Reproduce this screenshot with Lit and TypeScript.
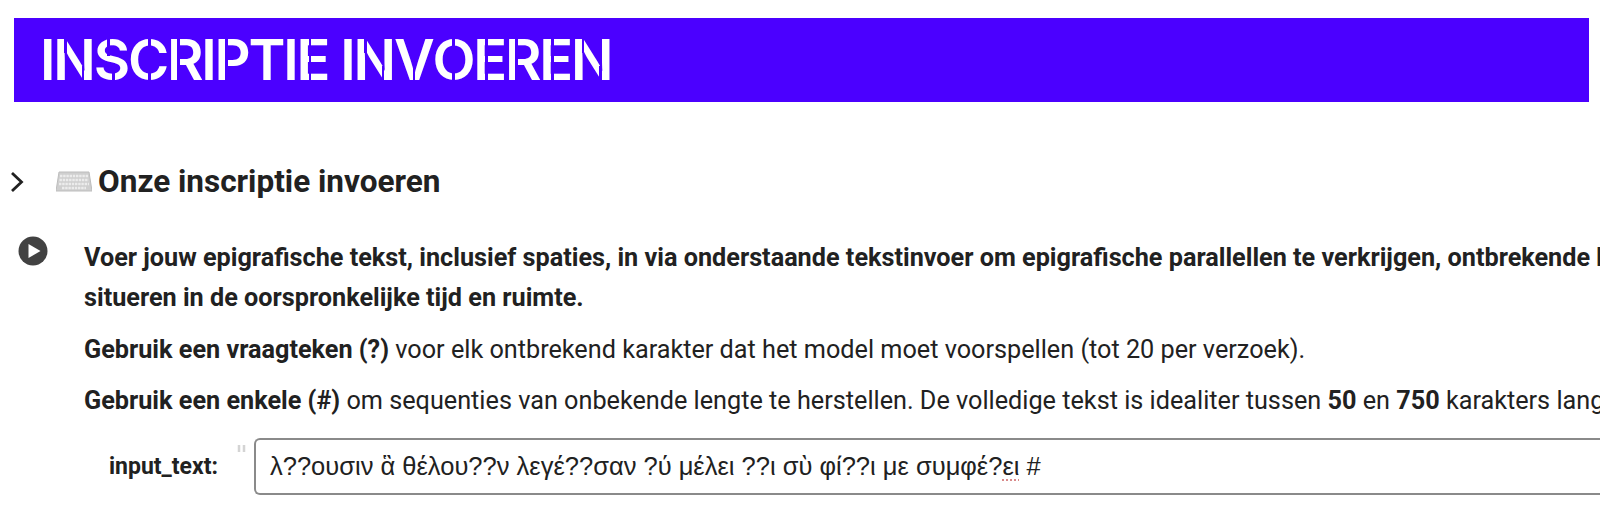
import { LitElement, html, css } from "lit";
import { customElement } from "lit/decorators.js";

type Cut = [number, number, number, number];
const CUTS: Record<string, Cut[]> = {
  N: [[27, 0, 2.5, 34], [70, 66, 2.5, 34]],
  S: [[40, 0, 3, 42], [54, 58, 3, 42]],
  C: [[52, 0, 3, 28], [52, 72, 3, 28]],
  R: [[30, 0, 2.5, 100]],
  P: [[31, 0, 2.5, 100]],
  E: [[38, 0, 2.5, 100]],
  V: [[49, 62, 2.5, 38]],
  O: [[49, 0, 3, 24], [49, 76, 3, 24]],
};

@customElement("app-root")
export class AppRoot extends LitElement {
  static styles = css`
    :host { display: block; width: 1600px; height: 528px; overflow: hidden; background: #fff; font-family: Roboto, "Liberation Sans", sans-serif; color: #212121; }
    .banner { height: 84px; margin: 18px 11px 0 14px; padding-left: 26px; background: #4b00ff; display: flex; align-items: center; }
    .title { font-family: Inter, sans-serif; font-weight: 600; font-size: 56px; letter-spacing: -2.2px; color: #fff; white-space: pre; line-height: 1; }
    .l { position: relative; display: inline-block; }
    .cut { position: absolute; background: #4b00ff; display: block; }
    .head { display: flex; align-items: center; margin-top: 58px; height: 44px; padding-left: 9px; }
    .chev { width: 16px; height: 24px; margin-right: 31px; }
    .kbd { width: 36px; height: 22px; margin-right: 6px; }
    h2 { margin: 0; font-size: 31.5px; font-weight: 700; line-height: 44px; white-space: nowrap; }
    .cell { display: flex; margin-top: 34px; padding-left: 18px; }
    .play { width: 30px; height: 30px; margin-right: 36px; flex: none; margin-top: -2px; }
    .body { flex: none; white-space: nowrap; font-size: 25.22px; color: #212121; }
    .body p { margin: 0 0 15px; line-height: 36px; font-weight: 400; }
    .body p.first { line-height: 40px; margin-bottom: 14px; }
    b { font-weight: 700; }
    .form { display: flex; align-items: center; margin-top: 4px; margin-left: 109px; }
    .label { font-weight: 700; font-size: 23px; width: 127px; flex: none; }
    .mark { width: 18px; flex: none; align-self: flex-start; }
    .input { border: 2px solid #8a8a8a; border-radius: 6px 0 0 6px; border-right: 0; height: 57px; box-sizing: border-box; width: 1400px; flex: none; padding-left: 14px; display: flex; align-items: center; font-family: "Liberation Sans", sans-serif; font-size: 25.5px; color: #212121; white-space: pre; }
    .sp { text-decoration: underline dotted #d98a8a 2px; text-underline-offset: 4px; }
  `;
  letter(c: string) {
    const cuts = CUTS[c] ?? [];
    return html`<span class="l">${c}${cuts.map(([x, y, w, h]) => html`<span class="cut" style="left:${x}%;top:${y * 0.73 + 13}%;width:${w}px;height:${h * 0.73}%"></span>`)}</span>`;
  }
  render() {
    return html`
      <div class="banner"><div class="title">${[..."INSCRIPTIE INVOEREN"].map((c) => this.letter(c))}</div></div>
      <div class="head">
        <svg class="chev" viewBox="0 0 16 24"><path d="M3 3l9.500 9-9.500 9" fill="none" stroke="#212121" stroke-width="2.8"/></svg>
        <svg class="kbd" viewBox="0 0 36 22"><path d="M3 1h30l3 19H0z" fill="#cfcfcf" stroke="#bdbdbd"/><path d="M4 5h28M3.500 9h29M3 13h30M6 17h24" stroke="#ececec" stroke-width="2.4" stroke-dasharray="2.4 .8"/></svg>
        <h2>Onze inscriptie invoeren</h2>
      </div>
      <div class="cell">
        <svg class="play" viewBox="0 0 30 30"><circle cx="15" cy="15" r="14.500" fill="#424242"/><path d="M10.500 8l12 7-12 7z" fill="#fff"/></svg>
        <div class="body">
          <p class="first"><b>Voer jouw epigrafische tekst, inclusief spaties, in via onderstaande tekstinvoer om epigrafische parallellen te verkrijgen, ontbrekende karakters te herstellen en deze te<br>situeren in de oorspronkelijke tijd en ruimte.</b></p>
          <p><b>Gebruik een vraagteken (?)</b> voor elk ontbrekend karakter dat het model moet voorspellen (tot 20 per verzoek).</p>
          <p><b>Gebruik een enkele (#)</b> om sequenties van onbekende lengte te herstellen. De volledige tekst is idealiter tussen <b>50</b> en <b>750</b> karakters lang.</p>
        </div>
      </div>
      <div class="form">
        <div class="label">input_text:</div>
        <svg class="mark" viewBox="0 0 18 16" height="16"><path d="M3 7v7M8 7v7" stroke="#d4d4d4" stroke-width="2.500"/></svg>
        <div class="input">λ??ουσιν ἃ θέλου??ν λεγέ??σαν ?ύ μέλει ??ι σὺ φί??ι με συμφέ?<span class="sp">ει</span> #</div>
      </div>
    `;
  }
}
